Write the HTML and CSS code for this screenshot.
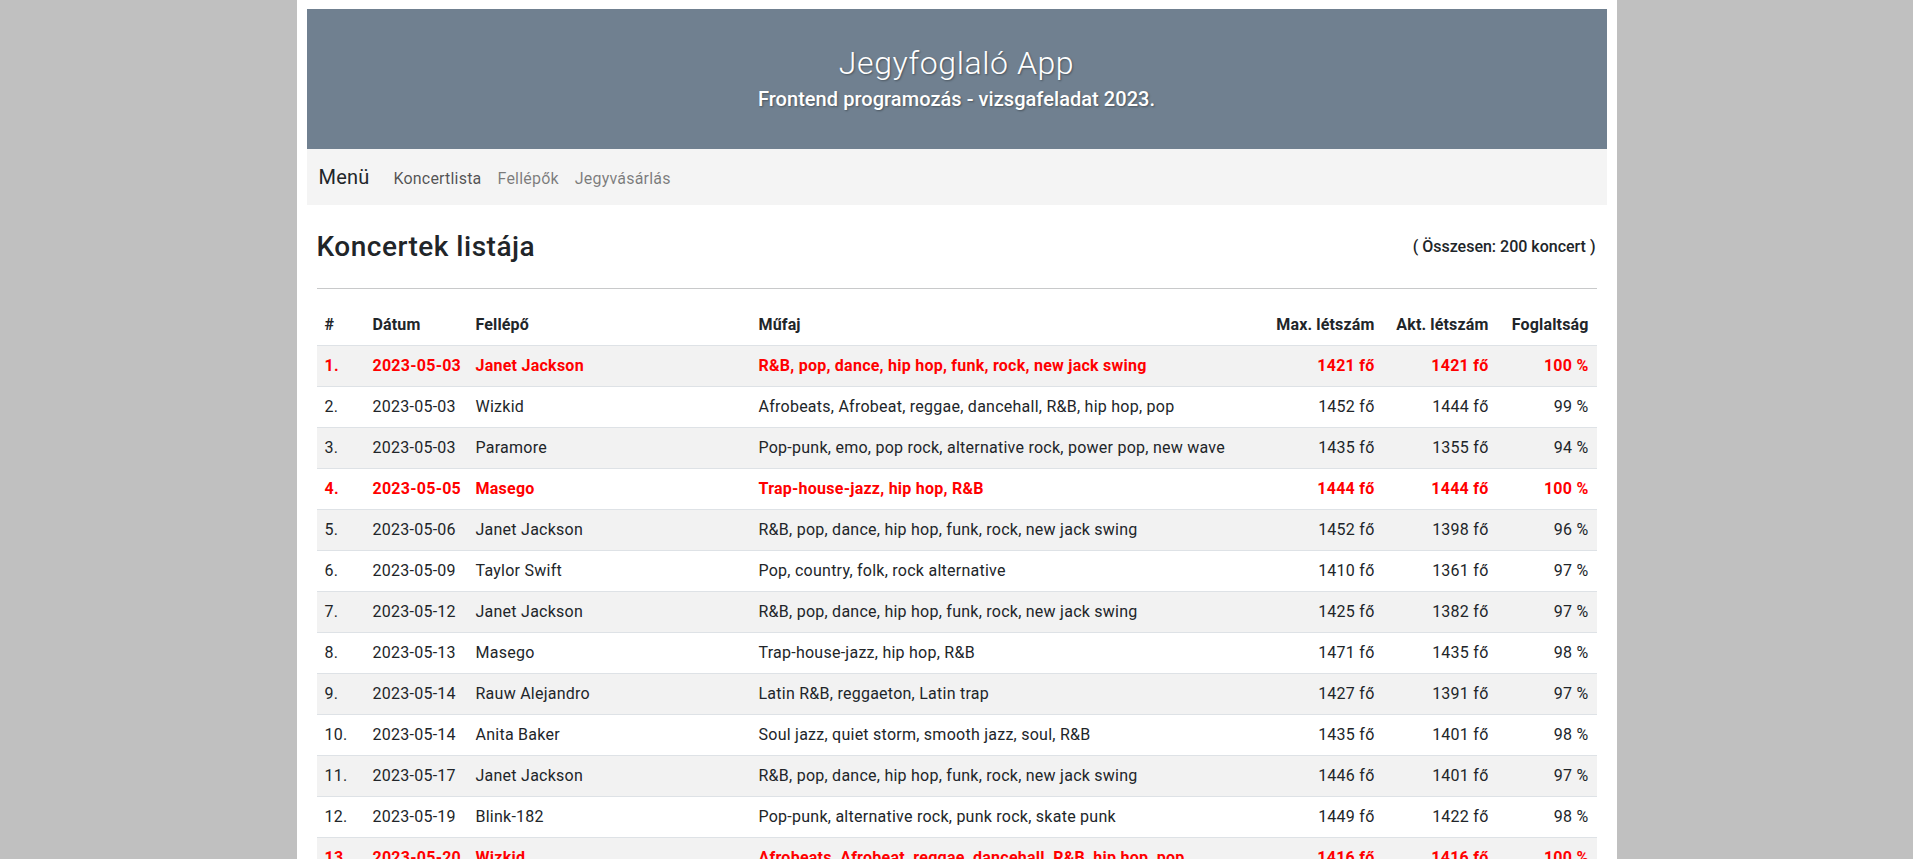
FILE: index.html
```html
<!DOCTYPE html>
<html lang="hu">
<head>
<meta charset="utf-8">
<title>Jegyfoglaló App</title>
<link rel="stylesheet" href="styles.css">
</head>
<body>
<div class="page">
  <header class="hero">
    <h1 class="hero-title">Jegyfoglaló App</h1>
    <p class="hero-sub">Frontend programozás - vizsgafeladat 2023.</p>
  </header>
  <nav class="menu">
    <span class="menu-brand">Menü</span>
    <a class="menu-link active" href="#">Koncertlista</a>
    <a class="menu-link" href="#">Fellépők</a>
    <a class="menu-link" href="#">Jegyvásárlás</a>
  </nav>
  <main class="content">
    <div class="title-row">
      <h3 class="list-title">Koncertek listája</h3>
      <span class="total">( Összesen: 200 koncert )</span>
    </div>
    <hr class="divider">
    <table class="concerts">
      <colgroup>
        <col class="c-num"><col class="c-date"><col class="c-artist"><col class="c-genre"><col class="c-max"><col class="c-akt"><col class="c-pct">
      </colgroup>
      <thead>
        <tr><th>#</th><th>Dátum</th><th>Fellépő</th><th>Műfaj</th><th class="r">Max. létszám</th><th class="r">Akt. létszám</th><th class="r">Foglaltság</th></tr>
      </thead>
      <tbody>
        <tr class="full"><td>1.</td><td>2023-05-03</td><td>Janet Jackson</td><td>R&amp;B, pop, dance, hip hop, funk, rock, new jack swing</td><td class="r">1421 fő</td><td class="r">1421 fő</td><td class="r">100 %</td></tr>
        <tr><td>2.</td><td>2023-05-03</td><td>Wizkid</td><td>Afrobeats, Afrobeat, reggae, dancehall, R&amp;B, hip hop, pop</td><td class="r">1452 fő</td><td class="r">1444 fő</td><td class="r">99 %</td></tr>
        <tr><td>3.</td><td>2023-05-03</td><td>Paramore</td><td>Pop-punk, emo, pop rock, alternative rock, power pop, new wave</td><td class="r">1435 fő</td><td class="r">1355 fő</td><td class="r">94 %</td></tr>
        <tr class="full"><td>4.</td><td>2023-05-05</td><td>Masego</td><td>Trap-house-jazz, hip hop, R&amp;B</td><td class="r">1444 fő</td><td class="r">1444 fő</td><td class="r">100 %</td></tr>
        <tr><td>5.</td><td>2023-05-06</td><td>Janet Jackson</td><td>R&amp;B, pop, dance, hip hop, funk, rock, new jack swing</td><td class="r">1452 fő</td><td class="r">1398 fő</td><td class="r">96 %</td></tr>
        <tr><td>6.</td><td>2023-05-09</td><td>Taylor Swift</td><td>Pop, country, folk, rock alternative</td><td class="r">1410 fő</td><td class="r">1361 fő</td><td class="r">97 %</td></tr>
        <tr><td>7.</td><td>2023-05-12</td><td>Janet Jackson</td><td>R&amp;B, pop, dance, hip hop, funk, rock, new jack swing</td><td class="r">1425 fő</td><td class="r">1382 fő</td><td class="r">97 %</td></tr>
        <tr><td>8.</td><td>2023-05-13</td><td>Masego</td><td>Trap-house-jazz, hip hop, R&amp;B</td><td class="r">1471 fő</td><td class="r">1435 fő</td><td class="r">98 %</td></tr>
        <tr><td>9.</td><td>2023-05-14</td><td>Rauw Alejandro</td><td>Latin R&amp;B, reggaeton, Latin trap</td><td class="r">1427 fő</td><td class="r">1391 fő</td><td class="r">97 %</td></tr>
        <tr><td>10.</td><td>2023-05-14</td><td>Anita Baker</td><td>Soul jazz, quiet storm, smooth jazz, soul, R&amp;B</td><td class="r">1435 fő</td><td class="r">1401 fő</td><td class="r">98 %</td></tr>
        <tr><td>11.</td><td>2023-05-17</td><td>Janet Jackson</td><td>R&amp;B, pop, dance, hip hop, funk, rock, new jack swing</td><td class="r">1446 fő</td><td class="r">1401 fő</td><td class="r">97 %</td></tr>
        <tr><td>12.</td><td>2023-05-19</td><td>Blink-182</td><td>Pop-punk, alternative rock, punk rock, skate punk</td><td class="r">1449 fő</td><td class="r">1422 fő</td><td class="r">98 %</td></tr>
        <tr class="full"><td>13.</td><td>2023-05-20</td><td>Wizkid</td><td>Afrobeats, Afrobeat, reggae, dancehall, R&amp;B, hip hop, pop</td><td class="r">1416 fő</td><td class="r">1416 fő</td><td class="r">100 %</td></tr>
      </tbody>
    </table>
  </main>
</div>
</body>
</html>
```
FILE: styles.css
```css
html {
  scrollbar-width: none;
}
html::-webkit-scrollbar {
  display: none;
}
body {
  margin: 0;
  background: #c0c0c0;
  font-family: Roboto, "Liberation Sans", sans-serif;
  font-size: 16px;
  line-height: 1.5;
  color: #212529;
}
.page {
  width: 1320px;
  margin: 0 auto;
  background: #fff;
  padding: 9px 10px 0;
  box-sizing: border-box;
  min-height: 100vh;
}
.hero {
  background: #708090;
  height: 140px;
  box-sizing: border-box;
  padding-top: 35px;
  text-align: center;
  color: #fff;
  text-shadow: 1px 1px 2px rgba(0, 0, 0, 0.35);
}
.hero-title {
  margin: 0;
  font-size: 32px;
  line-height: 38px;
  font-weight: 300;
  letter-spacing: 0.6px;
}
.hero-sub {
  margin: 5px 0 0;
  font-size: 20px;
  line-height: 24px;
  font-weight: 500;
  letter-spacing: 0.05px;
}
.menu {
  background: #f4f4f4;
  height: 56px;
  display: flex;
  align-items: baseline;
  padding: 0 12px;
  box-sizing: border-box;
}
.menu-brand {
  font-size: 20px;
  line-height: 56px;
  margin-right: 16px;
  color: #212529;
  letter-spacing: 0.2px;
}
.menu-link {
  padding: 0 8px;
  color: rgba(0, 0, 0, 0.5);
  text-decoration: none;
  font-size: 16px;
  letter-spacing: 0.2px;
}
.menu-link.active {
  color: rgba(0, 0, 0, 0.68);
}
.content {
  padding: 25px 10px 0;
}
.title-row {
  display: flex;
  justify-content: space-between;
  align-items: center;
  padding-bottom: 8px;
}
.list-title {
  margin: 0;
  font-size: 28px;
  line-height: 34px;
  font-weight: 500;
  letter-spacing: 0.5px;
}
.total {
  font-weight: 500;
  padding-right: 1px;
}
.divider {
  margin: 16px 0;
  border: 0;
  border-top: 1px solid #c8c9ca;
}
.concerts {
  width: 100%;
  table-layout: fixed;
  border-collapse: collapse;
}
.c-num { width: 48px; }
.c-date { width: 103px; }
.c-artist { width: 283px; }
.c-genre { width: 514px; }
.c-max { width: 118px; }
.c-akt { width: 114px; }
.c-pct { width: 100px; }
.concerts th,
.concerts td {
  padding: 8px;
  border-bottom: 1px solid #dee2e6;
  text-align: left;
  white-space: nowrap;
  line-height: 24px;
}
.concerts th {
  font-weight: 700;
  letter-spacing: 0.15px;
}
.concerts td {
  letter-spacing: 0.25px;
}
.concerts .r {
  text-align: right;
}
.concerts tbody tr:nth-child(odd) {
  background: #f2f2f2;
}
.concerts tr.full td {
  color: #ff0000;
  font-weight: 700;
}
```
